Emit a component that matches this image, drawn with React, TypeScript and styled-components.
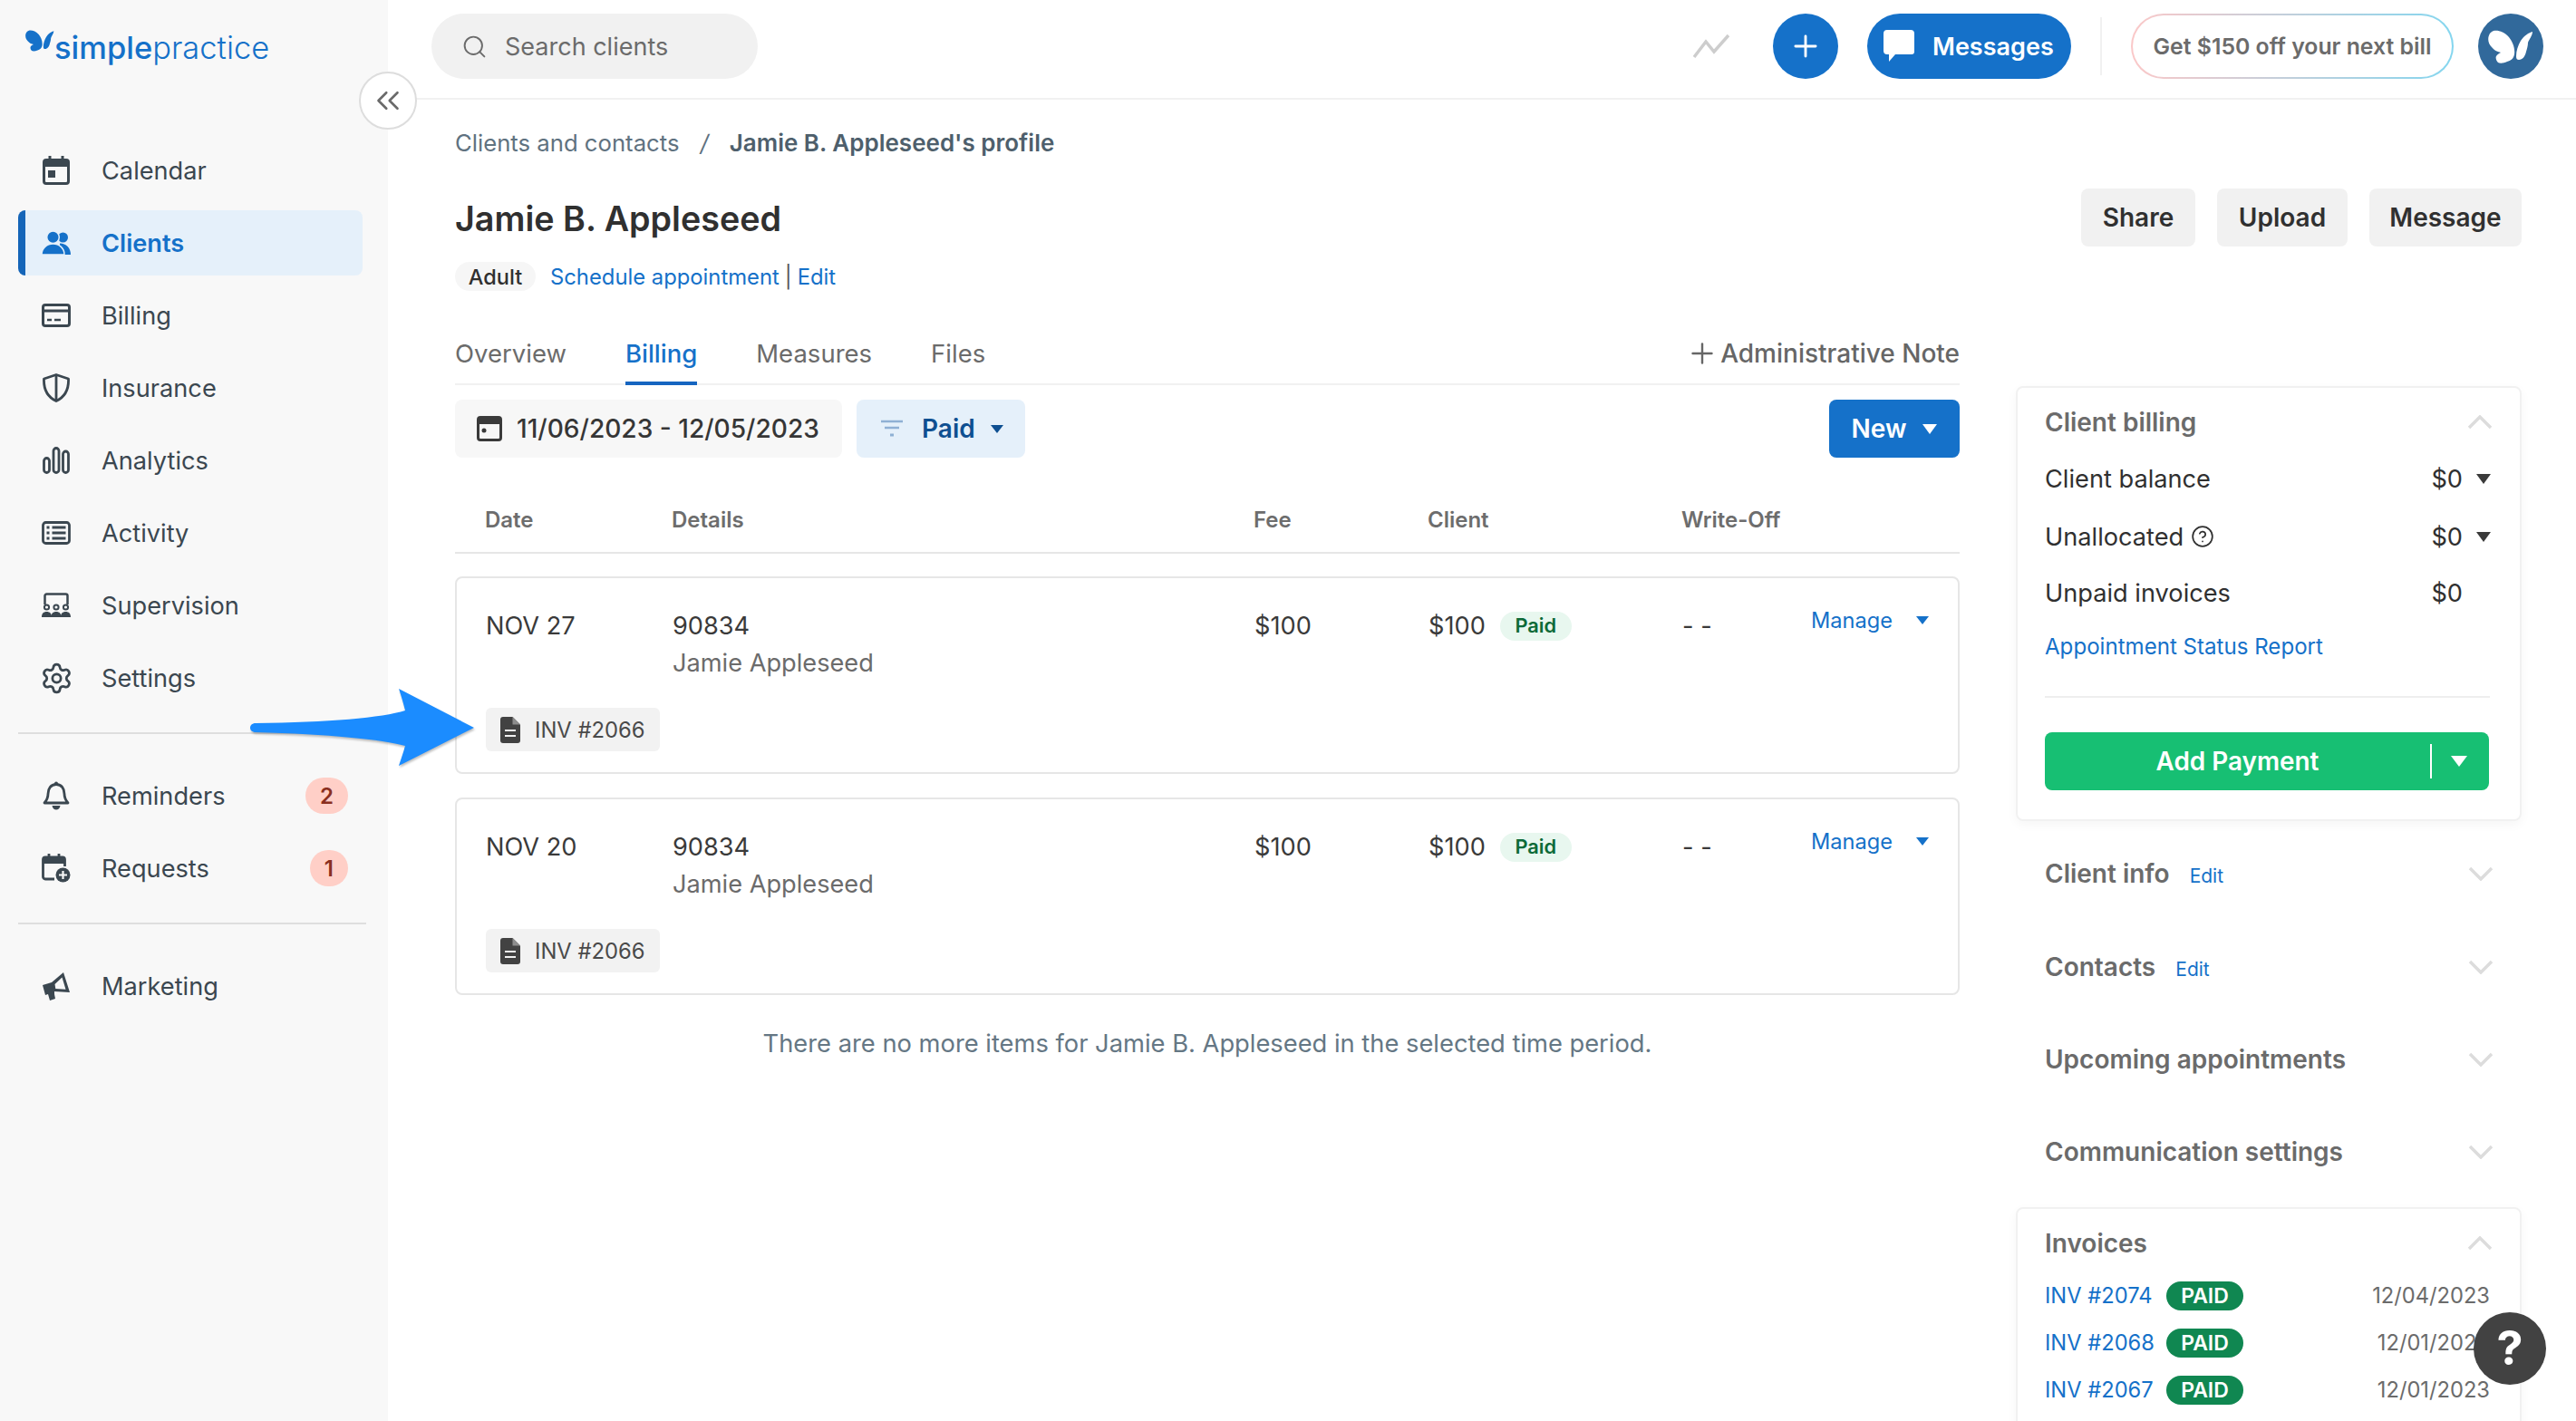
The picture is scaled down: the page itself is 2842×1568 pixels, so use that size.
import styled, { createGlobalStyle } from "styled-components";
import { ChevronsLeft, CircleHelp, Plus, Search, Settings } from "lucide-react";
import type { ReactNode } from "react";

const GlobalStyle = createGlobalStyle`
  html, body {
    margin: 0;
    padding: 0;
    background: #fff;
    font-family: Inter, "Liberation Sans", sans-serif;
    color: #303030;
  }
  * { box-sizing: border-box; }
`;

const CalendarIcon = () => (
  <svg width="32" height="34" viewBox="0 0 32 34" fill="none">
    <rect x="2.5" y="5.5" width="27" height="26" rx="2.5" stroke="currentColor" strokeWidth="3" />
    <path d="M2.5 6h27v7h-27z" fill="currentColor" />
    <path d="M9 1v5M23 1v5" stroke="currentColor" strokeWidth="3" />
    <rect x="7" y="17" width="8" height="8" fill="currentColor" />
  </svg>
);
const ClientsIcon = () => (
  <svg width="32" height="26" viewBox="0 0 32 26" fill="currentColor">
    <circle cx="23.5" cy="7" r="5.5" />
    <path d="M20 13.5c7 0 12 5 12 12.5H20z" />
    <g stroke="#e5f0fa" strokeWidth="1.5">
      <circle cx="12.5" cy="6.8" r="6.8" />
      <path d="M0 26c0-7 5.5-12 12.5-12S25 19 25 26z" />
    </g>
  </svg>
);
const BillingIcon = () => (
  <svg width="32" height="26" viewBox="0 0 32 26" fill="none">
    <rect x="1.5" y="1.5" width="29" height="23" rx="2.5" stroke="currentColor" strokeWidth="3" />
    <path d="M2 6.5h28v3H2z" fill="currentColor" />
    <path d="M6 18h5M14 18h7" stroke="currentColor" strokeWidth="2.5" />
  </svg>
);
const ShieldIcon = () => (
  <svg width="32" height="32" viewBox="0 0 32 32" fill="none" stroke="currentColor" strokeWidth="2.8">
    <path d="M16 1.5 29.5 6c.5 11-3 19.5-13.500 24.500C5.500 25.500 2 17 2.500 6z" strokeLinejoin="round" />
    <path d="M16 2v28" />
  </svg>
);
const AnalyticsIcon = () => (
  <svg width="30" height="30" viewBox="0 0 30 30" fill="none" stroke="currentColor" strokeWidth="2.8">
    <rect x="1.5" y="12.5" width="6" height="16" rx="3" />
    <rect x="12" y="1.5" width="6" height="27" rx="3" />
    <rect x="22.5" y="5" width="6" height="23.5" rx="3" />
  </svg>
);
const ActivityIcon = () => (
  <svg width="32" height="26" viewBox="0 0 32 26" fill="none" stroke="currentColor" strokeWidth="2.8">
    <rect x="1.5" y="1.5" width="29" height="23" rx="3" />
    <path d="M11.5 7h15M11.5 13h15M11.5 19h15" />
    <path d="M5.5 7h3M5.5 13h3M5.5 19h3" />
  </svg>
);
const SupervisionIcon = () => (
  <svg width="32" height="28" viewBox="0 0 32 28" fill="none">
    <path d="M3.5 13V3.5a2 2 0 0 1 2-2h21a2 2 0 0 1 2 2V13" stroke="currentColor" strokeWidth="2.5" />
    <g stroke="currentColor" strokeWidth="2">
      <circle cx="5.5" cy="16" r="2.6" />
      <circle cx="16" cy="16" r="2.6" />
      <circle cx="26.5" cy="16" r="2.6" />
    </g>
    <path fill="currentColor" d="M0 27c0-4 2-6 5.5-6s5.5 2 5.5 6zM10.500 27c0-4 2-6 5.500-6s5.500 2 5.500 6zM21 27c0-4 2-6 5.500-6s5.500 2 5.500 6z" />
  </svg>
);
const BellIcon = () => (
  <svg width="30" height="32" viewBox="0 0 30 32" fill="none">
    <path d="M15 3.5c-6 0-9 5-9 10.5 0 4-1.5 7-4 10h26c-2.500-3-4-6-4-10 0-5.500-3-10.500-9-10.500z" stroke="currentColor" strokeWidth="2.8" strokeLinejoin="round" />
    <circle cx="15" cy="2.5" r="2" fill="currentColor" />
    <path d="M10.5 27h9c-.5 3-2.500 4.500-4.500 4.500s-4-1.500-4.500-4.500z" fill="currentColor" />
  </svg>
);
const RequestsIcon = () => (
  <svg width="32" height="32" viewBox="0 0 32 32" fill="none">
    <path d="M14 28H4a2.500 2.500 0 0 1-2.500-2.500V6.500A2.500 2.500 0 0 1 4 4h19a2.500 2.500 0 0 1 2.500 2.500V14" stroke="currentColor" strokeWidth="2.8" />
    <path d="M2 5h23v6H2z" fill="currentColor" />
    <path d="M8 0v5M19 0v5" stroke="currentColor" strokeWidth="2.8" />
    <circle cx="23.5" cy="23.5" r="9.5" fill="#f8f8f8" />
    <circle cx="23.5" cy="23.5" r="8" fill="currentColor" />
    <path d="M23.5 19v9M19 23.5h9" stroke="#f8f8f8" strokeWidth="2.2" />
  </svg>
);
const MegaphoneIcon = () => (
  <svg width="30" height="32" viewBox="0 0 30 32">
    <path fill="currentColor" fillRule="evenodd" d="M0 15 10 12 23 1l7 22-17-1 0 3 1 5-6 2-2-7-3 1zM13.500 14l.8 5 11.200 .8L21.500 6.500z" />
  </svg>
);
const FileIcon = () => (
  <svg width="22" height="29" viewBox="0 0 22 29">
    <path d="M3 0h10.500L22 8.500V26a3 3 0 0 1-3 3H3a3 3 0 0 1-3-3V3a3 3 0 0 1 3-3z" fill="#424242" />
    <path d="M13.5 0v8.5H22z" fill="#8d8d8d" />
    <path d="M5 15h12M5 21h12" stroke="#f2f2f2" strokeWidth="2.2" />
  </svg>
);
const DateIcon = () => (
  <svg width="28" height="28" viewBox="0 0 28 28" fill="none">
    <rect x="1.5" y="1.5" width="25" height="25" rx="2.5" stroke="#3a3a3a" strokeWidth="3" />
    <path d="M2 2h24v7H2z" fill="#3a3a3a" />
    <circle cx="8" cy="16" r="2.5" fill="#3a3a3a" />
  </svg>
);
const FilterIcon = () => (
  <svg width="24" height="20" viewBox="0 0 24 20" fill="none">
    <path d="M0 2h24" stroke="#8fb0d4" strokeWidth="2.5" />
    <path d="M4 9h16" stroke="#8fb0d4" strokeWidth="2.5" />
    <path d="M10 17h4" stroke="#8fb0d4" strokeWidth="3" />
  </svg>
);
const TrendIcon = () => (
  <svg width="40" height="28" viewBox="0 0 40 28" fill="none">
    <path d="M1 26 14 9l9 11L39 2" stroke="#cdcdcd" strokeWidth="3.5" />
  </svg>
);
const BubbleIcon = () => (
  <svg width="34" height="36" viewBox="0 0 34 36" fill="#fff">
    <path d="M4 0h26a4 4 0 0 1 4 4v20a3 3 0 0 1-3 3H13l-7 8v-8H4a4 4 0 0 1-4-4V4a4 4 0 0 1 4-4z" />
  </svg>
);
const Butterfly = ({ width, color }: { width: number; color: string }) => (
  <svg width={width} viewBox="0 0 50 37" fill={color}>
    <path d="M6 1C11 0 18 2 23 8c4 5 7 12 6 19-1 5-4 7-8 8-4 2-8 2-10 1-2-2-3-5-2-7 1-2 3-3 5-4-3-1-7-2-10-6C1 16-1 11 1 6c1-3 3-4 5-5z" />
    <path d="M49 2c-4 1-9 4-13 10-3 5-5 11-5 17 0 3 1 4 3 4 4 0 7-4 8-9 1-3 2-7 2-10 1-3 5-8 5-12z" />
  </svg>
);
const ChevronMark = ({ up }: { up?: boolean }) => (
  <svg width="28" height="16" viewBox="0 0 28 16" fill="none">
    <path d={up ? "M2 14 14 2 26 14" : "M2 2 14 14 26 2"} stroke="#dcdcdc" strokeWidth="3.5" />
  </svg>
);

const Page = styled.div`
  position: relative;
  display: flex;
  width: 2842px;
  height: 1568px;
  overflow: hidden;
  background: #fff;
`;

// sidebar
const Sidebar = styled.aside`
  flex: 0 0 428px;
  padding-left: 20px;
  background: #f8f8f8;
`;
const Logo = styled.div`
  display: flex;
  align-items: flex-start;
  height: 152px;
  margin-left: 8px;
  padding-top: 33px;
  color: #1571c9;
  font-size: 34.5px;
  line-height: 40px;
`;
const LogoText = styled.span`
  font-weight: 500;
  b {
    font-weight: 300;
  }
`;
const Nav = styled.nav`
  display: flex;
  flex-direction: column;
  gap: 8px;
  width: 380px;
`;
const NavRow = styled.div<{ $active?: boolean }>`
  display: flex;
  align-items: center;
  height: 72px;
  padding: 0 16px 0 18px;
  border-left: 8px solid ${(p) => (p.$active ? "#1565b8" : "transparent")};
  border-radius: 8px;
  background: ${(p) => (p.$active ? "#e5f0fa" : "transparent")};
  color: ${(p) => (p.$active ? "#1571c9" : "#3b4750")};
  font-size: 27.2px;
  font-weight: ${(p) => (p.$active ? 600 : 400)};
`;
const NavIcon = styled.span`
  display: flex;
  align-items: center;
  justify-content: center;
  flex: 0 0 32px;
  min-width: 0;
  margin-right: 34px;
  svg {
    flex: none;
  }
`;
const NavLabel = styled.span`
  flex: 1;
`;
const CountBadge = styled.span`
  display: flex;
  align-items: center;
  justify-content: center;
  height: 40px;
  padding: 0 16px;
  border-radius: 20px;
  background: #ffcfc7;
  color: #8a2f20;
  font-size: 24px;
  font-weight: 600;
`;
const SideRule = styled.hr`
  width: 384px;
  height: 2px;
  margin: 24px 0 32px;
  border: 0;
  background: #dedede;
`;
const CollapseButton = styled.button`
  position: absolute;
  top: 79px;
  left: 396px;
  display: flex;
  align-items: center;
  justify-content: center;
  width: 64px;
  height: 64px;
  padding: 0;
  border: 2px solid #dddddd;
  border-radius: 50%;
  background: #fff;
  color: #6a6a6a;
`;

// top bar
const Main = styled.div`
  display: flex;
  flex: 1;
  flex-direction: column;
  min-width: 0;
`;
const TopBar = styled.header`
  display: flex;
  align-items: center;
  flex: 0 0 110px;
  padding: 0 36px 6px 48px;
  border-bottom: 2px solid #f1f1f1;
`;
const SearchBox = styled.div`
  display: flex;
  align-items: center;
  width: 360px;
  height: 72px;
  padding-left: 33px;
  border-radius: 36px;
  background: #f1f1f1;
  color: #6b6b6b;
  font-size: 27px;
  gap: 19px;
`;
const TopActions = styled.div`
  display: flex;
  align-items: center;
  margin-left: auto;
`;
const RoundButton = styled.button`
  display: flex;
  align-items: center;
  justify-content: center;
  width: 72px;
  height: 72px;
  margin-left: 48px;
  padding: 0;
  border: 0;
  border-radius: 50%;
  background: #1571c9;
  color: #fff;
`;
const MessagesButton = styled.button`
  display: flex;
  align-items: center;
  width: 225px;
  height: 72px;
  margin-left: 32px;
  padding: 0 0 0 18px;
  border: 0;
  border-radius: 36px;
  background: #1571c9;
  color: #fff;
  font-family: inherit;
  font-size: 27px;
  font-weight: 600;
  gap: 20px;
`;
const TopDivider = styled.span`
  width: 2px;
  height: 64px;
  margin: 0 32px;
  background: #f1f1f1;
`;
const PromoButton = styled.button`
  width: 356px;
  height: 72px;
  padding: 0;
  border: 2px solid transparent;
  border-radius: 36px;
  background: linear-gradient(#fff, #fff) padding-box, linear-gradient(90deg, #fbc8c8, #84d6ef) border-box;
  color: #6b6b6b;
  font-family: inherit;
  font-size: 24.8px;
  font-weight: 600;
`;
const Avatar = styled.div`
  display: flex;
  align-items: center;
  justify-content: center;
  width: 72px;
  height: 72px;
  margin-left: 27px;
  border-radius: 50%;
  background: #31699b;
`;

// content
const Content = styled.div`
  display: flex;
  flex: 1;
  min-height: 0;
  padding: 0 60px 0 74px;
  gap: 62px;
`;
const LeftColumn = styled.main`
  flex: 0 0 1660px;
`;
const Breadcrumb = styled.div`
  display: flex;
  height: 40px;
  margin-top: 28px;
  color: #5f7280;
  font-size: 25.7px;
  line-height: 40px;
  b {
    color: #4e5f6c;
    font-size: 26px;
    font-weight: 600;
  }
  i {
    margin: 0 23px;
  }
`;
const Title = styled.h1`
  height: 56px;
  margin: 35px 0 0;
  color: #303030;
  font-size: 37.7px;
  font-weight: 600;
  line-height: 56px;
`;
const MetaRow = styled.div`
  display: flex;
  align-items: center;
  height: 32px;
  margin-top: 20px;
  color: #303030;
  font-size: 23.8px;
`;
const AgePill = styled.span`
  display: flex;
  align-items: center;
  justify-content: center;
  width: 89px;
  height: 32px;
  margin-right: 16px;
  border-radius: 16px;
  background: #f6f6f6;
  font-size: 23.5px;
  font-weight: 500;
`;
const Link = styled.a`
  color: #1571c9;
`;
const Pipe = styled.span`
  margin: 0 6px;
  color: #555;
`;
const TabBar = styled.div`
  display: flex;
  align-items: stretch;
  height: 67px;
  margin-top: 37px;
  border-bottom: 2px solid #f1f1f1;
  gap: 65px;
`;
const Tab = styled.div<{ $active?: boolean }>`
  display: flex;
  align-items: center;
  margin-bottom: -2px;
  border-bottom: 4px solid ${(p) => (p.$active ? "#1565c0" : "transparent")};
  color: ${(p) => (p.$active ? "#1571c9" : "#6b6b6b")};
  font-size: 27.5px;
  font-weight: ${(p) => (p.$active ? 500 : 400)};
`;
const AdminNote = styled.div`
  display: flex;
  align-items: center;
  margin-left: auto;
  padding-bottom: 2px;
  color: #666;
  font-size: 28px;
  font-weight: 500;
  gap: 2px;
`;
const Toolbar = styled.div`
  display: flex;
  height: 64px;
  margin-top: 16px;
  gap: 16px;
`;
const DateButton = styled.button`
  display: flex;
  align-items: center;
  width: 427px;
  padding: 0 0 0 24px;
  border: 0;
  border-radius: 8px;
  background: #f7f7f7;
  color: #363636;
  font-family: inherit;
  font-size: 28.1px;
  font-weight: 500;
  gap: 16px;
`;
const FilterButton = styled.button`
  display: flex;
  align-items: center;
  width: 186px;
  padding: 0 0 0 27px;
  border: 0;
  border-radius: 8px;
  background: #e5f0fa;
  color: #0e4f91;
  font-family: inherit;
  font-size: 28px;
  font-weight: 600;
  gap: 21px;
`;
const NewButton = styled.button`
  display: flex;
  align-items: center;
  justify-content: center;
  width: 144px;
  margin-left: auto;
  padding: 0;
  border: 0;
  border-radius: 8px;
  background: #1571c9;
  color: #fff;
  font-family: inherit;
  font-size: 28px;
  font-weight: 600;
  gap: 18px;
`;
const Caret = styled.i<{ $color: string; $size?: number; $shift?: number }>`
  display: inline-block;
  flex: none;
  width: 0;
  height: 0;
  margin-left: ${(p) => p.$shift ?? 0}px;
  border-style: solid;
  border-width: ${(p) => p.$size ?? 9.5}px ${(p) => (p.$size ?? 9.5) * 0.8}px 0;
  border-color: ${(p) => p.$color} transparent transparent;
`;
const columns = "206px 642px 192px 280px 144px 1fr";
const TableHead = styled.div`
  display: grid;
  grid-template-columns: ${columns};
  align-items: end;
  height: 106px;
  padding: 0 0 19px 33px;
  border-bottom: 2px solid #e6e6e6;
  color: #6d6d6d;
  font-size: 24px;
  font-weight: 600;
  line-height: 32px;
`;
const Rows = styled.div`
  display: flex;
  flex-direction: column;
  margin-top: 25px;
  gap: 26px;
`;
const Row = styled.section`
  height: 218px;
  padding: 32px 0 0 32px;
  border: 2px solid #e6e6e6;
  border-radius: 8px;
`;
const RowGrid = styled.div`
  display: grid;
  grid-template-columns: ${columns};
  color: #3a3a3a;
  font-size: 27.2px;
  line-height: 41px;
`;
const Muted = styled.div`
  color: #6b6b6b;
`;
const ClientCell = styled.div`
  display: flex;
  align-items: center;
  align-self: start;
  gap: 16px;
`;
const PaidPill = styled.span`
  display: flex;
  align-items: center;
  justify-content: center;
  width: 79px;
  height: 32px;
  border-radius: 16px;
  background: #e8f7ef;
  color: #0d6a38;
  font-size: 21.8px;
  font-weight: 600;
`;
const ManageCell = styled.div`
  display: flex;
  align-items: center;
  align-self: start;
  height: 28px;
  margin-left: -2px;
  color: #1571c9;
  font-size: 23.6px;
  gap: 26px;
`;
const InvoiceChip = styled.div`
  display: flex;
  align-items: center;
  width: 192px;
  height: 48px;
  margin-top: 29px;
  padding-left: 16px;
  border-radius: 6px;
  background: #f2f2f2;
  color: #4a4a4a;
  font-size: 23.8px;
  gap: 16px;
`;
const EndNote = styled.div`
  margin-top: 34px;
  color: #657784;
  font-size: 27.3px;
  line-height: 40px;
  text-align: center;
`;

// right column
const RightColumn = styled.aside`
  flex: 0 0 558px;
  padding-top: 98px;
`;
const ProfileActions = styled.div`
  display: flex;
  justify-content: flex-end;
  height: 64px;
  gap: 24px;
`;
const GreyButton = styled.button<{ $width: number }>`
  width: ${(p) => p.$width}px;
  padding: 0;
  border: 0;
  border-radius: 8px;
  background: #f1f1f1;
  color: #303030;
  font-family: inherit;
  font-size: 28px;
  font-weight: 600;
`;
const Panel = styled.section<{ $top: number }>`
  margin-top: ${(p) => p.$top}px;
  padding: 18px 33px 32px 30px;
  border: 2px solid #f1f1f1;
  border-radius: 8px;
  box-shadow: 0 4px 12px rgba(0, 0, 0, 0.04);
`;
const PanelHead = styled.div`
  display: flex;
  align-items: center;
  justify-content: space-between;
  height: 40px;
  margin-right: -3px;
  color: #6b6b6b;
  font-size: 28px;
  font-weight: 600;
`;
const BalanceRow = styled.div<{ $top: number }>`
  display: flex;
  align-items: center;
  height: 40px;
  margin-top: ${(p) => p.$top}px;
  color: #303030;
  font-size: 27.2px;
`;
const HelpMark = styled(CircleHelp)`
  margin-left: 8px;
`;
const Amount = styled.span`
  margin-left: auto;
`;
const CaretSlot = styled.span`
  display: flex;
  justify-content: flex-end;
  width: 31px;
  margin-right: -1px;
`;
const ReportLink = styled.a`
  display: block;
  margin-top: 20px;
  color: #1571c9;
  font-size: 24.1px;
  line-height: 40px;
`;
const PanelRule = styled.hr`
  height: 2px;
  margin: 34px 0 38px;
  border: 0;
  background: #eeeeee;
`;
const PaymentButton = styled.button`
  display: flex;
  align-items: center;
  width: 490px;
  height: 64px;
  padding: 0;
  border: 0;
  border-radius: 8px;
  background: #17bf73;
  color: #fff;
  font-family: inherit;
  font-size: 27.9px;
  font-weight: 600;
`;
const PaymentLabel = styled.span`
  flex: 0 0 425px;
`;
const PaymentMenu = styled.span`
  display: flex;
  align-items: center;
  justify-content: center;
  flex: 1;
  height: 38px;
  padding-right: 3px;
  border-left: 2px solid #fff;
`;
const Sections = styled.div`
  margin-top: 7px;
`;
const Section = styled.div`
  display: flex;
  align-items: center;
  height: 102.4px;
  padding: 0 31px 0 32px;
  color: #6b6b6b;
  font-size: 28px;
  font-weight: 600;
`;
const SectionEdit = styled.a`
  margin-left: 22px;
  padding-top: 5px;
  color: #1571c9;
  font-size: 21px;
  font-weight: 400;
`;
const SectionChevron = styled.span`
  display: flex;
  margin-left: auto;
`;
const InvoiceList = styled.div`
  display: flex;
  flex-direction: column;
  margin-top: 22px;
  gap: 20px;
`;
const InvoiceRow = styled.div`
  display: grid;
  grid-template-columns: 134px 85px 1fr;
  align-items: center;
  height: 32px;
  color: #6b6b6b;
  font-size: 23.7px;
`;
const InvoiceLink = styled.a`
  color: #1571c9;
`;
const PaidTag = styled.span`
  display: flex;
  align-items: center;
  justify-content: center;
  height: 32px;
  border-radius: 16px;
  background: #108751;
  color: #fff;
  font-size: 23px;
  font-weight: 600;
`;
const InvoiceDate = styled.span`
  text-align: right;
`;
const HelpButton = styled.button`
  position: absolute;
  right: 33px;
  bottom: 40px;
  width: 80px;
  height: 80px;
  padding: 0;
  border: 0;
  border-radius: 50%;
  background: #424242;
  color: #fff;
  font-family: inherit;
  font-size: 52px;
  font-weight: 700;
  line-height: 80px;
`;
const CalloutArrow = styled.svg`
  position: absolute;
  top: 756px;
  left: 272px;
  filter: drop-shadow(1px 2px 1px rgba(0, 0, 0, 0.25));
`;

const mainNav: { label: string; icon: ReactNode; active?: boolean }[] = [
  { label: "Calendar", icon: <CalendarIcon /> },
  { label: "Clients", icon: <ClientsIcon />, active: true },
  { label: "Billing", icon: <BillingIcon /> },
  { label: "Insurance", icon: <ShieldIcon /> },
  { label: "Analytics", icon: <AnalyticsIcon /> },
  { label: "Activity", icon: <ActivityIcon /> },
  { label: "Supervision", icon: <SupervisionIcon /> },
  { label: "Settings", icon: <Settings size={37} strokeWidth={1.8} /> },
];

const billingRows = ["NOV 27", "NOV 20"];
const collapsedSections = [
  { title: "Client info", edit: true },
  { title: "Contacts", edit: true },
  { title: "Upcoming appointments" },
  { title: "Communication settings" },
];
const invoices = [
  { id: "INV #2074", date: "12/04/2023" },
  { id: "INV #2068", date: "12/01/2023" },
  { id: "INV #2067", date: "12/01/2023" },
];

export default function App() {
  return (
    <Page>
      <GlobalStyle />
      <Sidebar>
        <Logo>
          <Butterfly width={32} color="#1571c9" />
          <LogoText>
            simple<b>practice</b>
          </LogoText>
        </Logo>
        <Nav>
          {mainNav.map((item) => (
            <NavRow key={item.label} $active={item.active}>
              <NavIcon>{item.icon}</NavIcon>
              <NavLabel>{item.label}</NavLabel>
            </NavRow>
          ))}
        </Nav>
        <SideRule />
        <Nav>
          <NavRow>
            <NavIcon><BellIcon /></NavIcon>
            <NavLabel>Reminders</NavLabel>
            <CountBadge>2</CountBadge>
          </NavRow>
          <NavRow>
            <NavIcon><RequestsIcon /></NavIcon>
            <NavLabel>Requests</NavLabel>
            <CountBadge>1</CountBadge>
          </NavRow>
        </Nav>
        <SideRule />
        <Nav>
          <NavRow>
            <NavIcon><MegaphoneIcon /></NavIcon>
            <NavLabel>Marketing</NavLabel>
          </NavRow>
        </Nav>
      </Sidebar>
      <CollapseButton>
        <ChevronsLeft size={42} strokeWidth={1.5} />
      </CollapseButton>

      <Main>
        <TopBar>
          <SearchBox>
            <Search size={29} strokeWidth={1.6} />
            Search clients
          </SearchBox>
          <TopActions>
            <TrendIcon />
            <RoundButton>
              <Plus size={38} strokeWidth={1.8} />
            </RoundButton>
            <MessagesButton>
              <BubbleIcon />
              Messages
            </MessagesButton>
            <TopDivider />
            <PromoButton>Get $150 off your next bill</PromoButton>
            <Avatar>
              <Butterfly width={50} color="#fff" />
            </Avatar>
          </TopActions>
        </TopBar>

        <Content>
          <LeftColumn>
            <Breadcrumb>
              Clients and contacts<i>/</i><b>Jamie B. Appleseed's profile</b>
            </Breadcrumb>
            <Title>Jamie B. Appleseed</Title>
            <MetaRow>
              <AgePill>Adult</AgePill>
              <Link>Schedule appointment</Link>
              <Pipe>|</Pipe>
              <Link>Edit</Link>
            </MetaRow>
            <TabBar>
              <Tab>Overview</Tab>
              <Tab $active>Billing</Tab>
              <Tab>Measures</Tab>
              <Tab>Files</Tab>
              <AdminNote>
                <Plus size={36} strokeWidth={1.6} />
                Administrative Note
              </AdminNote>
            </TabBar>
            <Toolbar>
              <DateButton>
                <DateIcon />
                11/06/2023 - 12/05/2023
              </DateButton>
              <FilterButton>
                <FilterIcon />
                Paid
                <Caret $color="#0e4f91" $shift={-4} />
              </FilterButton>
              <NewButton>
                New
                <Caret $color="#fff" $size={11} />
              </NewButton>
            </Toolbar>
            <TableHead>
              <span>Date</span>
              <span>Details</span>
              <span>Fee</span>
              <span>Client</span>
              <span>Write-Off</span>
            </TableHead>
            <Rows>
              {billingRows.map((date) => (
                <Row key={date}>
                  <RowGrid>
                    <div>{date}</div>
                    <div>
                      90834
                      <Muted>Jamie Appleseed</Muted>
                    </div>
                    <div>$100</div>
                    <ClientCell>
                      $100
                      <PaidPill>Paid</PaidPill>
                    </ClientCell>
                    <div>- -</div>
                    <ManageCell>
                      Manage
                      <Caret $color="#1571c9" />
                    </ManageCell>
                  </RowGrid>
                  <InvoiceChip>
                    <FileIcon />
                    INV #2066
                  </InvoiceChip>
                </Row>
              ))}
            </Rows>
            <EndNote>There are no more items for Jamie B. Appleseed in the selected time period.</EndNote>
          </LeftColumn>

          <RightColumn>
            <ProfileActions>
              <GreyButton $width={126}>Share</GreyButton>
              <GreyButton $width={144}>Upload</GreyButton>
              <GreyButton $width={168}>Message</GreyButton>
            </ProfileActions>
            <Panel $top={154}>
              <PanelHead>
                Client billing
                <ChevronMark up />
              </PanelHead>
              <BalanceRow $top={22}>
                Client balance
                <Amount>$0</Amount>
                <CaretSlot><Caret $color="#3a3a3a" $size={11} /></CaretSlot>
              </BalanceRow>
              <BalanceRow $top={24}>
                Unallocated
                <HelpMark size={26} strokeWidth={1.6} />
                <Amount>$0</Amount>
                <CaretSlot><Caret $color="#3a3a3a" $size={11} /></CaretSlot>
              </BalanceRow>
              <BalanceRow $top={22}>
                Unpaid invoices
                <Amount>$0</Amount>
                <CaretSlot />
              </BalanceRow>
              <ReportLink>Appointment Status Report</ReportLink>
              <PanelRule />
              <PaymentButton>
                <PaymentLabel>Add Payment</PaymentLabel>
                <PaymentMenu><Caret $color="#fff" $size={12} /></PaymentMenu>
              </PaymentButton>
            </Panel>
            <Sections>
              {collapsedSections.map((s) => (
                <Section key={s.title}>
                  {s.title}
                  {s.edit && <SectionEdit>Edit</SectionEdit>}
                  <SectionChevron><ChevronMark /></SectionChevron>
                </Section>
              ))}
            </Sections>
            <Panel $top={9}>
              <PanelHead>
                Invoices
                <ChevronMark up />
              </PanelHead>
              <InvoiceList>
                {invoices.map((inv) => (
                  <InvoiceRow key={inv.id}>
                    <InvoiceLink>{inv.id}</InvoiceLink>
                    <PaidTag>PAID</PaidTag>
                    <InvoiceDate>{inv.date}</InvoiceDate>
                  </InvoiceRow>
                ))}
              </InvoiceList>
            </Panel>
          </RightColumn>
        </Content>
      </Main>

      <HelpButton>?</HelpButton>
      <CalloutArrow width="256" height="96" viewBox="0 0 256 96">
        <path d="M168 4 251 47 168 89 C171 80 173 74 175 67 C150 60 90 54 10 52 C2 52 2 42 10 42 C90 41 150 36 175 28 C173 20 171 13 168 4 Z" fill="#1b8cff" />
      </CalloutArrow>
    </Page>
  );
}
